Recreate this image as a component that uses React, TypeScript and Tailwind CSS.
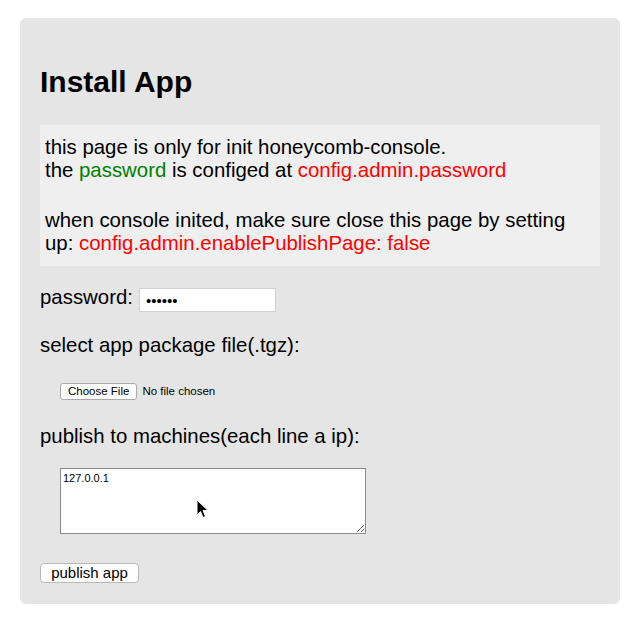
import React from 'react';

const font = { fontFamily: '"Liberation Sans", Arial, sans-serif' };

function Cursor() {
  return (
    <svg
      className="absolute left-[196px] top-[499px]"
      width="13"
      height="20"
      viewBox="0 0 13 20"
    >
      <path
        d="M1 1 L1 16 L4.5 12.5 L7 18.5 L9.5 17.5 L7 11.5 L12 11.5 Z"
        fill="#000"
        stroke="#fff"
        strokeWidth="1"
        strokeLinejoin="round"
      />
    </svg>
  );
}

export default function App() {
  return (
    <div className="relative min-h-[623px] bg-white pt-[18px] pl-[20px] text-black" style={font}>
      <div className="w-[600px] rounded-[6px] bg-[#e5e5e5] px-5 pt-[46px] pb-[21px]">
        <h1 className="text-[30px] font-bold leading-[36px]">Install App</h1>

        <div className="mt-[25px] bg-[#efefef] pl-[5px] pt-[11px] pb-[11px] text-[20.4px] leading-[23px]">
          <p>
            this page is only for init honeycomb-console.
            <br />
            the <span className="text-[#008000]">password</span> is configed at{' '}
            <span className="text-[#ff0000]">config.admin.password</span>
          </p>
          <p className="mt-[27px]">
            when console inited, make sure close this page by setting
            <br />
            up: <span className="text-[#ff0000]">config.admin.enablePublishPage: false</span>
          </p>
        </div>

        <div className="mt-[20px] flex items-start text-[20.4px] leading-[23px]">
          <label>password:</label>
          <input
            type="password"
            readOnly
            defaultValue="123456"
            className="ml-[6px] mt-[2px] h-[24px] w-[137px] border border-[#cfcfcf] bg-white px-[6px] text-[15px] outline-none"
            style={font}
          />
        </div>

        <p className="mt-[22px] text-[20.4px] leading-[23px]">select app package file(.tgz):</p>

        <div className="mt-[26px] ml-5 flex items-center gap-[5px] text-[11.5px]">
          <span className="h-[17px] rounded-[3px] border border-[#aaaaaa] bg-white px-[7px] leading-[15px]">
            Choose File
          </span>
          <span>No file chosen</span>
        </div>

        <p className="mt-[25px] text-[20.4px] leading-[23px]">publish to machines(each line a ip):</p>

        <textarea
          readOnly
          defaultValue="127.0.0.1"
          className="mt-[20px] ml-5 block h-[66px] w-[306px] border border-[#8a8a8a] bg-white px-[2px] pt-[3px] text-[11px] leading-[13px] outline-none"
          style={font}
        />

        <button className="mt-[29px] block h-[20px] w-[99px] rounded-[4px] border border-[#b8b8b8] bg-white text-[15px] leading-[18px]">
          publish app
        </button>
      </div>
      <Cursor />
    </div>
  );
}
